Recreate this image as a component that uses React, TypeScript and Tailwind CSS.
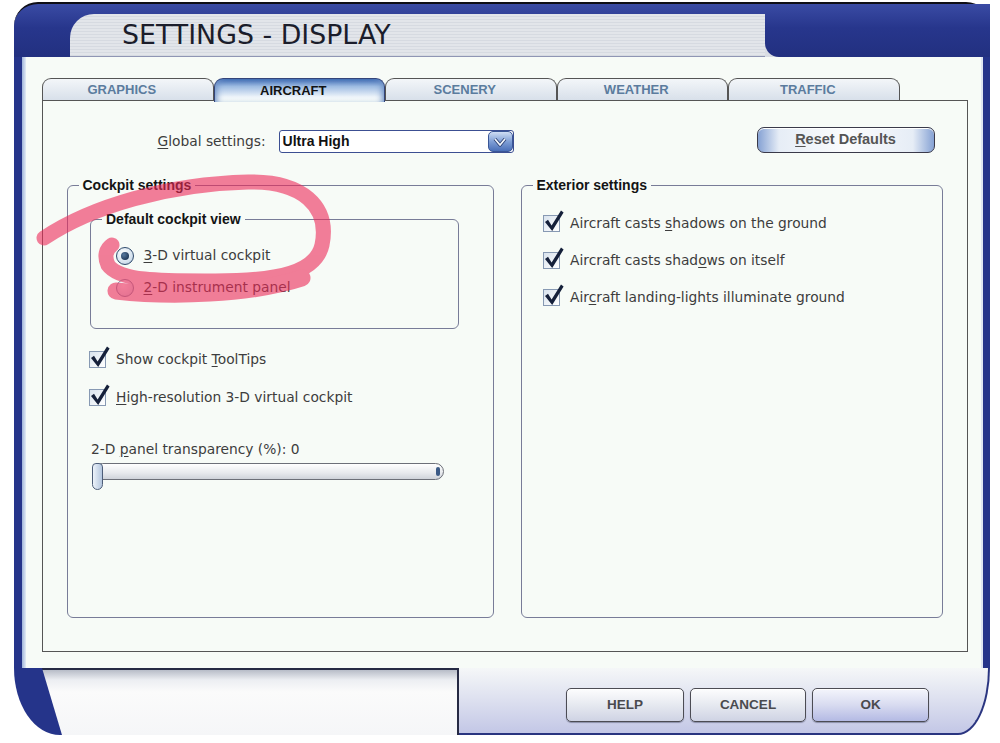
import type { ReactNode } from "react"

const TABS = ["GRAPHICS", "AIRCRAFT", "SCENERY", "WEATHER", "TRAFFIC"]

function Tab({ label, active }: { label: string; active?: boolean }) {
  return (
    <div
      className={
        active
          ? "relative z-10 -mb-[1.5px] flex h-[23.5px] w-[171.5px] items-center justify-center rounded-t-[9px] border-[1.5px] border-b-0 border-[#34457a] bg-[linear-gradient(to_bottom,#3d69b2_0%,#9dbbe2_32%,#eef4fa_78%,#f7fbf7_100%)] pr-[12px] text-[#121212] shadow-[inset_6px_0_6px_-4px_#6d90c6,inset_-6px_0_6px_-4px_#6d90c6]"
          : "flex h-[22px] w-[171.5px] items-center justify-center rounded-t-[9px] border-[1.5px] border-b-0 border-[#555] bg-[linear-gradient(to_bottom,#f3f6f9,#d8e0ea)] pr-[12px] text-[#5b7c9e]"
      }
    >
      <span className="font-['Liberation_Sans',sans-serif] text-[13px] font-bold">{label}</span>
    </div>
  )
}

function GroupBox({
  title,
  className,
  bodyClass,
  children,
}: {
  title: string
  className?: string
  bodyClass?: string
  children: ReactNode
}) {
  return (
    <fieldset className={`rounded-[6px] border-[1.5px] border-[#787c98] ${className ?? ""}`}>
      <legend className="ml-[11px] px-[4px] font-['Liberation_Sans',sans-serif] text-[14px] font-bold leading-[17px] text-[#141414]">
        {title}
      </legend>
      <div className={bodyClass}>{children}</div>
    </fieldset>
  )
}

function CheckBox() {
  return (
    <span className="relative h-[17px] w-[17px] shrink-0 border border-[#8799b3] bg-[linear-gradient(135deg,#d9e3ee,#ffffff)]">
      <svg className="absolute -top-[6px] left-[0px] h-[22px] w-[20px]" viewBox="0 0 20 22">
        <path d="M1 12 L4 9.8 L7.6 15.6 L17 0.5 L19.6 2.6 L8.2 21 Z" fill="#15203a" />
      </svg>
    </span>
  )
}

function CheckRow({ className, children }: { className?: string; children: ReactNode }) {
  return (
    <div className={`flex h-[20px] items-center gap-[10px] ${className ?? ""}`}>
      <CheckBox />
      <span>{children}</span>
    </div>
  )
}

function Radio({ on }: { on?: boolean }) {
  return (
    <span
      className={
        on
          ? "flex h-[18px] w-[18px] shrink-0 items-center justify-center rounded-full border-[1.5px] border-[#2f4a6c] bg-[radial-gradient(circle_at_40%_35%,#ffffff,#d3e1ee_65%,#9bb3cd)]"
          : "flex h-[18px] w-[18px] shrink-0 items-center justify-center rounded-full border-[1.5px] border-[#8a98ac] bg-[radial-gradient(circle_at_40%_35%,#ffffff,#e3e9f0_65%,#c2cedb)]"
      }
    >
      {on && <span className="h-[8px] w-[8px] rounded-full bg-[radial-gradient(circle_at_35%_35%,#56789f,#0f2442)]" />}
    </span>
  )
}

function DialogButton({ label, className }: { label: string; className: string }) {
  return (
    <button
      className={`flex h-[34px] items-center justify-center rounded-[5px] border-[1.5px] border-[#4c4c54] font-['Liberation_Sans',sans-serif] text-[13.5px] font-bold text-[#4a4a4e] shadow-[inset_0_1px_0_#ffffff,0_1px_1px_#8a8ea8] ${className}`}
    >
      {label}
    </button>
  )
}

export default function App() {
  return (
    <div className="relative h-[743px] w-[1000px] overflow-hidden bg-white pl-[14px] pt-[2px] font-['DejaVu_Sans',sans-serif] text-[13.8px] text-[#3d3d3d]">
      <div className="flex h-[733px] w-[976px] flex-col">
        {/* title bar */}
        <div className="flex h-[55px] rounded-t-[24px] border-t-2 border-[#0e0e16] bg-[linear-gradient(to_bottom,#3a4ba4,#27368c_45%,#223080)]">
          <div className="w-[56px]" />
          <div className="mt-[10px] flex flex-1 items-center rounded-tl-[24px] border-b border-[#8f96b4] bg-[repeating-linear-gradient(to_bottom,#e2e5ea_0px,#e2e5ea_2px,#d6dae1_2px,#d6dae1_3px)] pl-[52px]">
            <h1 className="font-['DejaVu_Sans',sans-serif] text-[26.8px] font-normal leading-none text-[#1b1d2b]">
              SETTINGS - DISPLAY
            </h1>
          </div>
          <div className="w-[225px] bg-[linear-gradient(to_bottom,transparent_10px,#d9dde4_10px)]">
            <div className="h-full rounded-bl-[14px] bg-[linear-gradient(to_bottom,#3a4ba4,#27368c_45%,#223080)]" />
          </div>
        </div>

        {/* body */}
        <div className="flex min-h-0 flex-1">
          <div className="w-[8px] bg-[#25348a]" />
          <div className="w-[4px] bg-[linear-gradient(to_right,#9fb4da,#e4ecf6)]" />
          <div className="flex flex-1 flex-col bg-[#f7fbf7] pb-[16px] pl-[16px] pr-[13px] pt-[21px]">
            <div className="flex items-end">
              {TABS.map((t) => (
                <Tab key={t} label={t} active={t === "AIRCRAFT"} />
              ))}
            </div>

            <div className="flex flex-1 flex-col border-[1.5px] border-[#555] bg-[#f7fbf7]">
              <div className="mt-[25.5px] flex h-[26px] items-center pl-[114.5px] pr-[32.5px]">
                <span className="mt-[3px]">
                  <u className="underline-offset-2">G</u>lobal settings:
                </span>
                <div className="ml-[13px] mt-[4px] flex h-[23px] w-[235px] items-stretch overflow-hidden rounded-[3px] border-[1.5px] border-[#3c4f92] bg-white">
                  <span className="flex flex-1 items-center pl-[3px] font-['Liberation_Sans',sans-serif] text-[14px] font-bold text-[#111]">
                    Ultra High
                  </span>
                  <span className="flex w-[25px] items-center justify-center rounded-[5px] border border-[#3a5696] bg-[linear-gradient(to_bottom,#d0def4,#7f9fd6_50%,#4a6fb8)]">
                    <svg width="14" height="12" viewBox="0 0 14 12">
                      <path d="M2 3 L7 9 L12 3" fill="none" stroke="#2c3f70" strokeWidth="3.5" strokeLinejoin="round" />
                      <path d="M2 3 L7 9 L12 3" fill="none" stroke="#eef3fb" strokeWidth="1.8" strokeLinejoin="round" />
                    </svg>
                  </span>
                </div>
                <div className="flex-1" />
                <button className="flex h-[26px] w-[178px] items-center justify-center rounded-[7px] border-[1.5px] border-[#3a3a4a] bg-[linear-gradient(to_right,#86a2d4,#e6edf6_12%,#fbfcfd_50%,#e6edf6_88%,#86a2d4)] font-['Liberation_Sans',sans-serif] text-[14.5px] font-bold text-[#555] shadow-[inset_0_1px_0_#ffffff]">
                  <span>
                    <u className="underline-offset-2">R</u>eset Defaults
                  </span>
                </button>
              </div>

              <div className="mt-[24.5px] flex flex-1 gap-[27px] pb-[33px] pl-[23.5px] pr-[24.5px]">
                <GroupBox title="Cockpit settings" className="w-[427px]" bodyClass="pl-[21.5px]">
                  <fieldset className="ml-[1px] mt-[17px] w-[369px] rounded-[6px] border-[1.5px] border-[#787c98] pb-[30px]">
                    <legend className="ml-[11px] px-[4px] font-['Liberation_Sans',sans-serif] text-[14px] font-bold leading-[17px] text-[#141414]">
                      Default cockpit view
                    </legend>
                    <div className="pl-[24.5px]">
                      <div className="mt-[17.5px] flex h-[20px] items-center gap-[10px]">
                        <Radio on />
                        <span>
                          <u className="underline-offset-2">3</u>-D virtual cockpit
                        </span>
                      </div>
                      <div className="mt-[12px] flex h-[20px] items-center gap-[10px]">
                        <Radio />
                        <span>
                          <u className="underline-offset-2">2</u>-D instrument panel
                        </span>
                      </div>
                    </div>
                  </fieldset>

                  <CheckRow className="mt-[21px]">
                    Show cockpit <u className="underline-offset-2">T</u>oolTips
                  </CheckRow>
                  <CheckRow className="mt-[18px]">
                    <u className="underline-offset-2">H</u>igh-resolution 3-D virtual cockpit
                  </CheckRow>

                  <div className="ml-[2px] mt-[33.5px] leading-[17px]">
                    2-D <u className="underline-offset-2">p</u>anel transparency (%): 0
                  </div>
                  <div className="relative ml-[3px] mt-[5px] h-[28px] w-[352px]">
                    <div className="relative ml-[2px] mt-[4px] h-[17px] rounded-full border-[1.5px] border-[#6c6f78] bg-[linear-gradient(to_bottom,#ffffff,#e7e9ed_60%,#cfd3da)]">
                      <span className="absolute right-[3px] top-[2.5px] h-[9px] w-[4px] rounded-full bg-[#3b5a86]" />
                    </div>
                    <span className="absolute left-0 top-0 h-[27px] w-[11px] rounded-b-[7px] rounded-t-[5px] border-[1.5px] border-[#4d5d78] bg-[linear-gradient(to_right,#edf3fa,#b4c6de)]" />
                  </div>
                </GroupBox>

                <GroupBox title="Exterior settings" className="flex-1" bodyClass="pl-[21.5px]">
                  <CheckRow className="mt-[19.5px]">
                    Aircraft casts <u className="underline-offset-2">s</u>hadows on the ground
                  </CheckRow>
                  <CheckRow className="mt-[17px]">
                    Aircraft casts shad<u className="underline-offset-2">o</u>ws on itself
                  </CheckRow>
                  <CheckRow className="mt-[17px]">
                    Air<u className="underline-offset-2">c</u>raft landing-lights illuminate ground
                  </CheckRow>
                </GroupBox>
              </div>
            </div>
          </div>
          <div className="w-[2px] bg-[#dfe6f2]" />
          <div className="w-[7px] bg-[#25348a]" />
        </div>

        {/* footer */}
        <div className="flex h-[67px]">
          <div className="w-[445px] rounded-bl-[46px_67px] bg-[#25348a]">
            <div className="h-full border-r-2 border-t-2 border-[#262a44] bg-[linear-gradient(to_bottom,#b7bcc7_0px,#eceef2_10px,#fbfbfb_22px,#f5f6f8_100%)] [clip-path:polygon(28px_0,100%_0,100%_100%,48px_100%)]" />
          </div>
          <div className="flex flex-1 items-start justify-end gap-[6px] rounded-br-[32px_67px] border-b-2 border-r-2 border-[#2a3580] bg-[linear-gradient(to_bottom,#f5f7f8,#dfe2f0_45%,#c3c7e6)] pr-[59px] pt-[20px]">
            <DialogButton label="HELP" className="w-[118px] bg-[linear-gradient(to_bottom,#fdfdfe,#e6e9f0_50%,#cfd3e4)]" />
            <DialogButton label="CANCEL" className="w-[116px] bg-[linear-gradient(to_bottom,#fdfdfe,#e6e9f0_50%,#cfd3e4)]" />
            <DialogButton label="OK" className="w-[117px] bg-[linear-gradient(to_bottom,#f4f5fc,#d8dbf0_50%,#b4bae4)]" />
          </div>
        </div>
      </div>

      {/* marker scribble around the cockpit view choice */}
      <svg className="pointer-events-none absolute left-0 top-0" width="1000" height="743">
        <g fill="none" stroke="#ec2a58" strokeLinecap="round" strokeLinejoin="round" opacity="0.6">
          <path
            d="M44 238 C92 206 168 184 248 182 C302 181 330 206 322 245 C316 272 280 281 215 281 C165 281 120 282 108 265 C104 256 106 249 112 245"
            strokeWidth="15"
          />
          <path d="M116 291 C170 297 250 295 302 278" strokeWidth="17" />
        </g>
      </svg>
    </div>
  )
}
